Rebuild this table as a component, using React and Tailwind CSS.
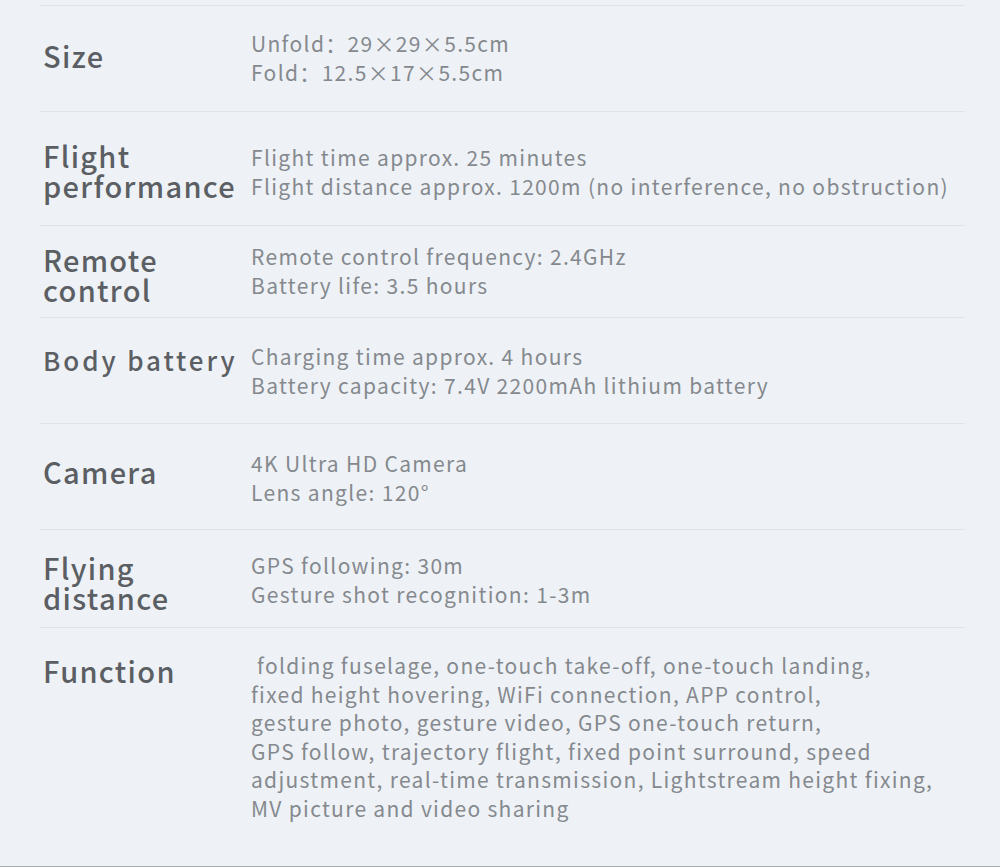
export default function App() {
  const big = "text-[29px] tracking-[1.3px]";
  const rows = [
    { label: ["Size"], values: ["Unfold：29×29×5.5cm", "Fold：12.5×17×5.5cm"], h: "h-[106px]", lc: `${big} mb-[8px]`, vc: "mb-[2px]" },
    { label: ["Flight", "performance"], values: ["Flight time approx. 25 minutes", "Flight distance approx. 1200m (no interference, no obstruction)"], h: "h-[114px]", lc: `${big} mt-[2px]`, vc: "mt-[6px]" },
    { label: ["Remote", "control"], values: ["Remote control frequency: 2.4GHz", "Battery life: 3.5 hours"], h: "h-[92px]", lc: `${big} mt-[4px]`, vc: "mb-[2px]" },
    { label: ["Body battery"], values: ["Charging time approx. 4 hours", "Battery capacity: 7.4V 2200mAh lithium battery"], h: "h-[106px]", lc: "text-[26px] tracking-[2.9px] mb-[22px]", vc: "" },
    { label: ["Camera"], values: ["4K Ultra HD Camera", "Lens angle: 120°"], h: "h-[106px]", lc: `${big} mb-[12px]`, vc: "mt-[2px]" },
    { label: ["Flying", "distance"], values: ["GPS following: 30m", "Gesture shot recognition: 1-3m"], h: "h-[98px]", lc: `${big} mt-[6px]`, vc: "mt-[2px]" },
  ];
  const font = { fontFamily: '"Noto Sans CJK SC", "Noto Sans", sans-serif' };
  return (
    <div className="w-[1000px] h-[867px] bg-[#eef2f6] overflow-hidden" style={font}>
      <div className="h-[5px]" />
      <div className="mx-[40px] w-[925px] border-t border-[#dfe4ea]">
        {rows.map((r, i) => (
          <div key={i} className={`flex items-center border-b border-[#dfe4ea] ${r.h}`}>
            <div className={`w-[211px] shrink-0 pl-[3px] leading-[30px] font-medium text-[#5b5f64] whitespace-nowrap ${r.lc}`}>
              {r.label.map((l, j) => (
                <div key={j}>{l}</div>
              ))}
            </div>
            <div className={`text-[21px] leading-[29px] tracking-[1.33px] text-[#85898e] whitespace-nowrap ${r.vc}`}>
              {r.values.map((v, j) => (
                <div key={j}>{v}</div>
              ))}
            </div>
          </div>
        ))}
        <div className="flex h-[238px] pt-[23px]">
          <div className="w-[211px] shrink-0 pl-[3px] text-[29px] leading-[38px] font-medium tracking-[1.3px] text-[#5b5f64]">Function</div>
          <div className="text-[21px] leading-[28.6px] tracking-[1.3px] text-[#85898e] whitespace-nowrap">
            <div>&nbsp;folding fuselage, one-touch take-off, one-touch landing,</div>
            <div>fixed height hovering, WiFi connection, APP control,</div>
            <div>gesture photo, gesture video, GPS one-touch return,</div>
            <div>GPS follow, trajectory flight, fixed point surround, speed</div>
            <div>adjustment, real-time transmission, Lightstream height fixing,</div>
            <div>MV picture and video sharing</div>
          </div>
        </div>
      </div>
      <div className="border-t border-[#a9adb2]" />
    </div>
  );
}
